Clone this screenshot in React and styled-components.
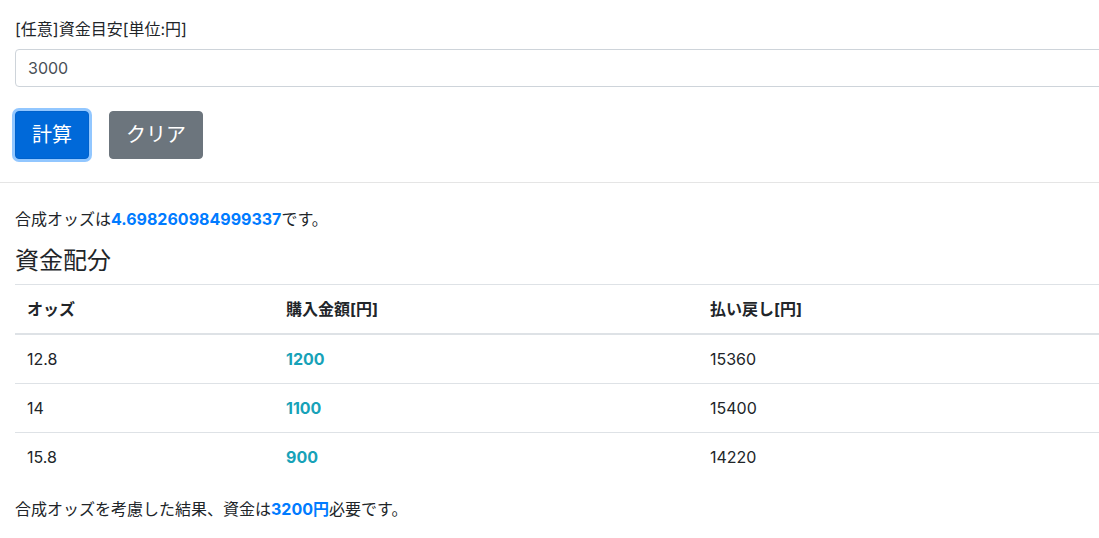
import React, { Component } from 'react'
import styled, { createGlobalStyle } from 'styled-components'

const GlobalStyle = createGlobalStyle`
	html, body {
		margin: 0;
		overflow: hidden;
	}
	body {
		font-family: Inter, "Noto Sans CJK JP", sans-serif;
		font-size: 16px;
		line-height: 1.5;
		color: #212529;
		background: #fff;
	}
`

const Page = styled.div`
	width: 1140px;
	padding-top: 17px;
`

const Container = styled.div`
	padding: 0 15px;
`

const FormGroup = styled.div`
	margin-bottom: 24px;
`

const Label = styled.label`
	display: block;
	margin-bottom: 8px;
	font-size: 16px;
`

const Input = styled.input`
	display: block;
	box-sizing: border-box;
	width: 100%;
	height: 38px;
	padding: 6px 12px;
	font-family: inherit;
	font-size: 16px;
	color: #495057;
	border: 1px solid #ced4da;
	border-radius: 4px;
	outline: none;
`

const ButtonRow = styled.div`
	display: flex;
	gap: 20px;
	margin-bottom: 23px;
`

const Button = styled.button`
	box-sizing: border-box;
	height: 48px;
	padding: 8px 16px;
	font-family: inherit;
	font-size: 20px;
	line-height: 30px;
	color: #fff;
	border-radius: 4px;
	border: 1px solid ${p => (p.variant === 'primary' ? '#0062cc' : '#6c757d')};
	background: ${p => (p.variant === 'primary' ? '#0069d9' : '#6c757d')};
	box-shadow: ${p => (p.focused ? '0 0 0 3px rgba(38, 143, 255, 0.5)' : 'none')};
`

const Rule = styled.hr`
	margin: 0 0 24px;
	border: 0;
	border-top: 1px solid rgba(0, 0, 0, 0.1);
`

const Text = styled.p`
	margin: 0 0 16px;
	font-size: 16px;
`

const Strong = styled.strong`
	font-weight: 700;
	color: ${p => p.color || '#007bff'};
`

const Heading = styled.h4`
	margin: 0 0 8px;
	font-size: 24px;
	font-weight: 400;
	line-height: 1.2;
`

const Table = styled.table`
	width: 100%;
	margin-bottom: 16px;
	border-collapse: collapse;
	table-layout: fixed;
`

const Th = styled.th`
	width: ${p => p.w || 'auto'};
	padding: 12px;
	text-align: left;
	font-size: 16px;
	font-weight: 700;
	border-top: 1px solid #dee2e6;
	border-bottom: 2px solid #dee2e6;
`

const Td = styled.td`
	padding: 12px;
	border-top: 1px solid #dee2e6;
	font-weight: ${p => (p.bold ? 700 : 400)};
	color: ${p => p.color || '#212529'};
`

const rows = [
	{ odds: '12.8', amount: 1200, payout: 15360 },
	{ odds: '14', amount: 1100, payout: 15400 },
	{ odds: '15.8', amount: 900, payout: 14220 }
]

class App extends Component {
	state = {
		budget: '3000'
	}

	handleBudgetChange = e => {
		this.setState({ budget: e.target.value })
	}

	render() {
		return (
			<Page>
				<GlobalStyle />
				<Container>
					<FormGroup>
						<Label>{'[任意]資金目安[単位:円]'}</Label>
						<Input type="text" value={this.state.budget} onChange={this.handleBudgetChange} />
					</FormGroup>
					<ButtonRow>
						<Button variant="primary" focused>
							{'計算'}
						</Button>
						<Button variant="secondary">{'クリア'}</Button>
					</ButtonRow>
				</Container>
				<Rule />
				<Container>
					<Text>
						{'合成オッズは'}
						<Strong>{'4.698260984999337'}</Strong>
						{'です。'}
					</Text>
					<Heading>{'資金配分'}</Heading>
					<Table>
						<thead>
							<tr>
								<Th w="235px">{'オッズ'}</Th>
								<Th w="400px">{'購入金額[円]'}</Th>
								<Th>{'払い戻し[円]'}</Th>
							</tr>
						</thead>
						<tbody>
							{rows.map(row => (
								<tr key={row.odds}>
									<Td>{row.odds}</Td>
									<Td bold color="#17a2b8">
										{row.amount}
									</Td>
									<Td>{row.payout}</Td>
								</tr>
							))}
						</tbody>
					</Table>
					<Text>
						{'合成オッズを考慮した結果、資金は'}
						<Strong>{'3200円'}</Strong>
						{'必要です。'}
					</Text>
				</Container>
			</Page>
		)
	}
}

export default App
